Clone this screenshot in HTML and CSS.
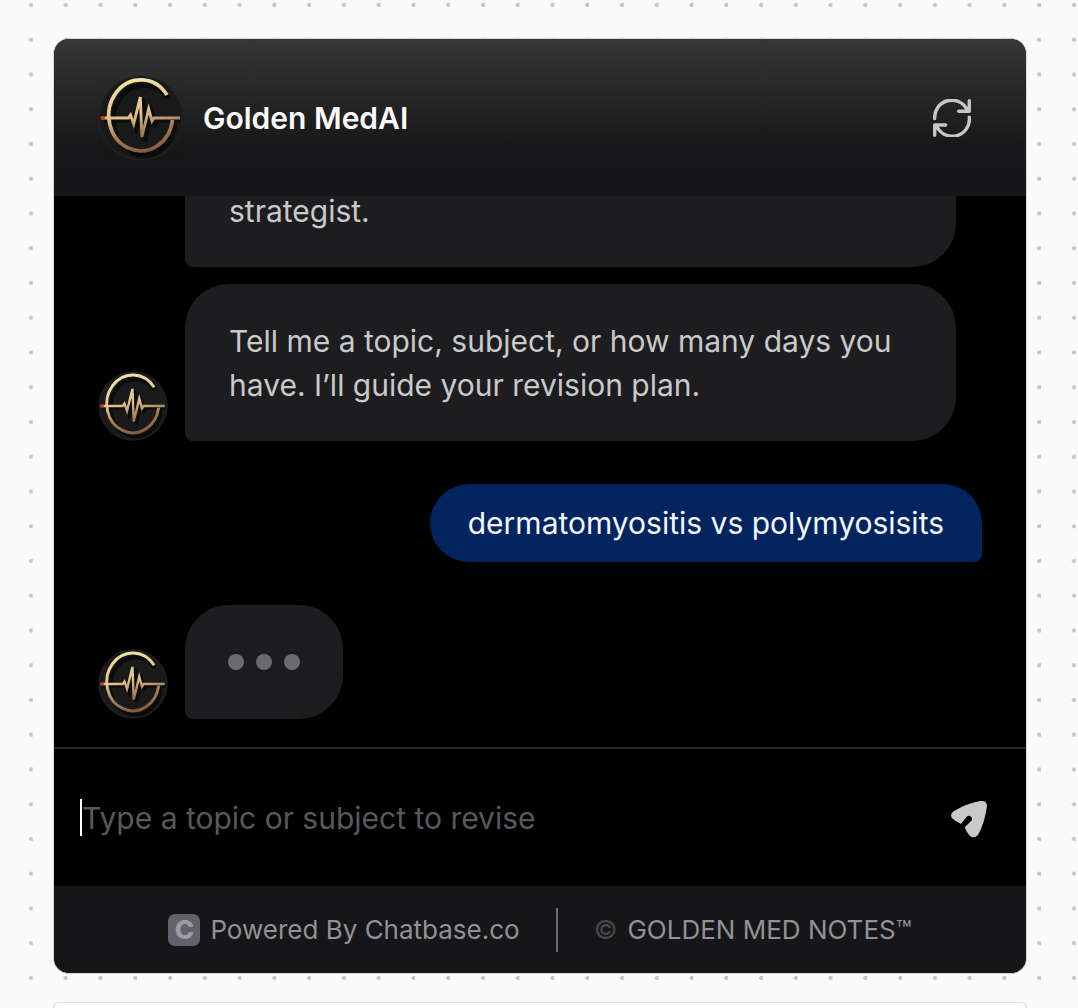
FILE: index.html
```html
<!DOCTYPE html>
<html lang="en">

<head>
    <meta charset="UTF-8">
    <meta name="viewport" content="width=device-width, initial-scale=1.0">
    <title>Golden MedAI</title>
    <link rel="stylesheet" href="styles.css">
</head>

<body>
    <!-- shared logo -->
    <svg class="defs" width="0" height="0" aria-hidden="true">
        <defs>
            <linearGradient id="gold" gradientUnits="userSpaceOnUse" x1="30" y1="4" x2="50" y2="80">
                <stop offset="0" stop-color="#f3e3a6" />
                <stop offset="0.45" stop-color="#e0c18c" />
                <stop offset="0.7" stop-color="#a87c56" />
                <stop offset="1" stop-color="#80573d" />
            </linearGradient>
            <symbol id="logo" viewBox="0 0 86 86">
                <circle cx="43" cy="43" r="42" fill="#1a1a1a" stroke="#232627" stroke-width="1" />
                <g fill="none" stroke="#050807" stroke-width="5" opacity="0.75">
                    <path d="M70 23A31 35 0 1 0 77 48" />
                    <path d="M6 45H33L35 43L38 52L45 24L47 66L53 37L57 48L59 45H82" />
                </g>
                <g fill="none" stroke="url(#gold)" stroke-width="3.6">
                    <path d="M69 20A32 35.5 0 1 0 74.5 45" />
                    <path d="M4 43H30.5L32.5 40L35.7 49L42.3 22L43.9 62L50.7 34L54 46L56 43H82" stroke-width="2.9" />
                </g>
                <path d="M2.5 43H7" stroke="#c8342c" stroke-width="3" />
            </symbol>
        </defs>
    </svg>

    <main class="chat">
        <header class="chat-header">
            <svg class="avatar avatar-large" aria-hidden="true"><use href="#logo" /></svg>
            <h1>Golden MedAI</h1>
            <button class="icon-btn" type="button" aria-label="Restart chat">
                <svg class="icon-refresh" viewBox="0 0 111 111" aria-hidden="true">
                    <path d="M5 57A50 50 0 0 1 100 32M106 5V36H75M106 53A50 50 0 0 1 11 80M5 106V76H37" />
                </svg>
            </button>
        </header>

        <section class="messages">
            <div class="message">
                <p class="bubble">strategist.</p>
            </div>
            <div class="message">
                <svg class="avatar" aria-hidden="true"><use href="#logo" /></svg>
                <p class="bubble">Tell me a topic, subject, or how many days you have. I’ll guide your revision plan.</p>
            </div>
            <div class="message message-user">
                <p class="bubble">dermatomyositis vs polymyosisits</p>
            </div>
            <div class="message">
                <svg class="avatar" aria-hidden="true"><use href="#logo" /></svg>
                <div class="bubble typing">
                    <span></span>
                    <span></span>
                    <span></span>
                </div>
            </div>
        </section>

        <form class="composer">
            <span class="caret"></span>
            <input type="text" aria-label="Message" placeholder="Type a topic or subject to revise">
            <button class="icon-btn" type="button" aria-label="Send">
                <svg class="icon-send" viewBox="0 -6 120 120" aria-hidden="true">
                    <path d="M92 3Q111 1 111 19Q104 70 84 105Q71 118 59 107Q49 96 44 82L64 62Q69 55 63 50Q57 45 50 50L33 72Q18 65 6 55Q-2 42 12 33Q50 10 92 3Z" />
                </svg>
            </button>
        </form>

        <footer class="chat-footer">
            <a class="powered" href="#">
                <span class="badge">C</span>
                Powered By Chatbase.co
            </a>
            <span class="divider"></span>
            <p class="copyright"><span class="copy-sign">©</span>GOLDEN MED NOTES™</p>
        </footer>
    </main>

    <div class="next-card"></div>
</body>

</html>
```

FILE: styles.css
```css
* {
    box-sizing: border-box;
}

body {
    display: flex;
    flex-direction: column;
    height: 100vh;
    margin: 0;
    padding: 38px 51px 0 53px;
    overflow: hidden;
    font-family: Inter, "Liberation Sans", sans-serif;
    font-size: 30px;
    font-optical-sizing: none;
    line-height: 44px;
    color: #c9c9cc;
    background-color: #fafafa;
    background-image: radial-gradient(circle at 31px 5px, #c6c6c6 2px, transparent 2px);
    background-size: 35px 35px;
    background-repeat: round;
}

h1,
p {
    margin: 0;
}

.defs {
    position: absolute;
}

.chat {
    display: flex;
    flex: 1;
    flex-direction: column;
    min-height: 0;
    overflow: hidden;
    background: #000;
    border: 1px solid #d8d8da;
    border-radius: 16px;
}

.chat-header {
    display: flex;
    align-items: center;
    gap: 19px;
    padding: 36px 55px 35px 44px;
    background: linear-gradient(to bottom, #363636, #18181a 68%, #161618);
}

.chat-header h1 {
    flex: 1;
    font-size: 30px;
    font-weight: 600;
    color: #fafafa;
}

.avatar {
    flex: none;
    width: 70px;
    height: 70px;
}

.avatar-large {
    width: 86px;
    height: 86px;
}

.icon-btn {
    display: flex;
    padding: 0;
    background: none;
    border: none;
    cursor: pointer;
}

.icon-refresh {
    width: 38px;
    height: 38px;
    fill: none;
    stroke: #c6c6c8;
    stroke-width: 10;
    stroke-linecap: round;
    stroke-linejoin: round;
}

/* newest messages stay at the bottom, older ones slide under the header */
.messages {
    display: flex;
    flex: 1;
    flex-direction: column;
    justify-content: flex-end;
    gap: 43px;
    min-height: 0;
    padding: 0 44px 28px;
    overflow: hidden;
}

.message {
    display: flex;
    align-items: flex-end;
    gap: 17px;
    padding-right: 26px;
}

.message:first-child {
    margin-bottom: -26px;
    padding-left: 87px;
}

.bubble {
    flex: 1;
    padding: 35px 44px 34px;
    background: #1d1d1f;
    border-radius: 44px 44px 44px 8px;
}

.message-user {
    justify-content: flex-end;
    padding-right: 0;
}

.message-user .bubble {
    flex: none;
    padding: 17px 38px;
    color: #f4f8ff;
    background: #04245f;
    border-radius: 39px 39px 8px 39px;
}

.typing {
    display: flex;
    flex: none;
    gap: 12px;
    padding: 49px 43px;
}

.typing span {
    width: 16px;
    height: 16px;
    background: #6b6a71;
    border-radius: 50%;
}

.composer {
    display: flex;
    align-items: center;
    padding: 46px 36px 46px 26px;
    border-top: 2px solid #27272a;
}

.caret {
    width: 2px;
    height: 37px;
    background: #fff;
}

.composer input {
    flex: 1;
    min-width: 0;
    height: 45px;
    padding: 0;
    font: inherit;
    font-optical-sizing: none;
    color: #fafafa;
    background: none;
    border: none;
    outline: none;
}

.composer input::placeholder {
    color: #58585d;
}

.icon-send {
    width: 40px;
    height: 40px;
    fill: #c9c9cb;
}

.chat-footer {
    display: flex;
    align-items: center;
    justify-content: center;
    gap: 36px;
    padding: 22px 22px 21px;
    font-size: 26px;
    color: #919197;
    background: #161618;
}

.powered {
    display: flex;
    align-items: center;
    gap: 10px;
    color: inherit;
    text-decoration: none;
}

.badge {
    width: 32px;
    height: 32px;
    font-size: 26px;
    font-weight: 800;
    line-height: 32px;
    text-align: center;
    color: #9b9ba1;
    background: #626268;
    border-radius: 7px;
}

.divider {
    width: 2px;
    height: 44px;
    background: #6d6d73;
}

.copyright {
    display: flex;
    gap: 10px;
}

.copy-sign {
    color: #48484b;
}

.next-card {
    flex: none;
    height: 6px;
    margin-top: 28px;
    background: #fff;
    border: 1px solid #dedee0;
    border-bottom: none;
    border-radius: 16px 16px 0 0;
}
```
